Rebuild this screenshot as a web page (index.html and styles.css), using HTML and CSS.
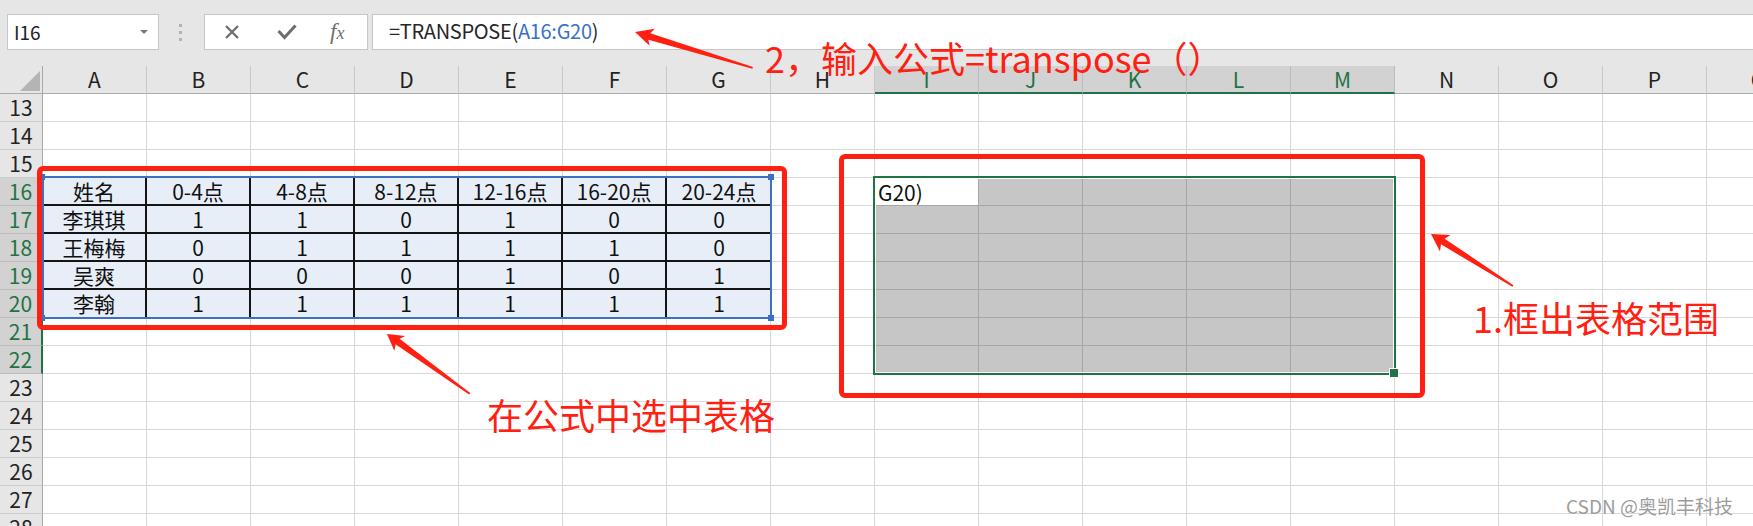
FILE: index.html
```html
<!DOCTYPE html>
<html lang="zh-CN">
<head>
<meta charset="utf-8">
<title>TRANSPOSE</title>
<link rel="stylesheet" href="styles.css">
</head>
<body>
<div class="page">
  <div class="toolbar">
    <div class="namebox"><span class="name">I16</span><span class="caret"></span></div>
    <div class="grip"><i></i><i></i><i></i></div>
    <div class="btns">
      <svg class="ic-x" width="16" height="16" viewBox="0 0 16 16"><path d="M2 2 L14 14 M14 2 L2 14" stroke="#6d6d6d" stroke-width="2.2" fill="none"/></svg>
      <svg class="ic-ok" width="20" height="16" viewBox="0 0 20 16"><polyline points="1.5,7 7.5,13.5 18.5,1.5" stroke="#6d6d6d" stroke-width="3" fill="none"/></svg>
      <span class="fx">f<span class="fx-x">x</span></span>
    </div>
    <div class="formula">=TRANSPOSE(<span class="ref">A16:G20</span>)</div>
  </div>

  <div class="sheet">
    <div class="corner"><span class="tri"></span></div>
    <div class="colheads">
      <div class="ch">A</div><div class="ch">B</div><div class="ch">C</div><div class="ch">D</div>
      <div class="ch">E</div><div class="ch">F</div><div class="ch">G</div><div class="ch">H</div>
      <div class="ch on">I</div><div class="ch on">J</div><div class="ch on">K</div><div class="ch on">L</div>
      <div class="ch on">M</div><div class="ch">N</div><div class="ch">O</div><div class="ch">P</div>
      <div class="ch">Q</div>
    </div>
    <div class="rowheads">
      <div class="rh">13</div><div class="rh">14</div><div class="rh">15</div>
      <div class="rh on">16</div><div class="rh on">17</div><div class="rh on">18</div>
      <div class="rh on">19</div><div class="rh on">20</div><div class="rh on">21</div>
      <div class="rh on">22</div><div class="rh">23</div><div class="rh">24</div>
      <div class="rh">25</div><div class="rh">26</div><div class="rh">27</div><div class="rh">28</div>
    </div>
    <div class="cells">
      <div class="tbl">
        <div class="tc">姓名</div><div class="tc">0-4点</div><div class="tc">4-8点</div><div class="tc">8-12点</div><div class="tc">12-16点</div><div class="tc">16-20点</div><div class="tc">20-24点</div>
        <div class="tc">李琪琪</div><div class="tc">1</div><div class="tc">1</div><div class="tc">0</div><div class="tc">1</div><div class="tc">0</div><div class="tc">0</div>
        <div class="tc">王梅梅</div><div class="tc">0</div><div class="tc">1</div><div class="tc">1</div><div class="tc">1</div><div class="tc">1</div><div class="tc">0</div>
        <div class="tc">吴爽</div><div class="tc">0</div><div class="tc">0</div><div class="tc">0</div><div class="tc">1</div><div class="tc">0</div><div class="tc">1</div>
        <div class="tc">李翰</div><div class="tc">1</div><div class="tc">1</div><div class="tc">1</div><div class="tc">1</div><div class="tc">1</div><div class="tc">1</div>
        <i class="hd tl"></i><i class="hd tr"></i><i class="hd bl"></i><i class="hd br"></i>
      </div>
      <div class="sel">
        <div class="sel-fill">
          <div class="active">G20)</div>
        </div>
      </div>
    </div>
  </div>

  <div class="annot">
    <div class="box box-left"></div>
    <div class="box box-right"></div>
    <svg class="arrows" width="1753" height="526" viewBox="0 0 1753 526">
      <g fill="#ff2012">
        <polygon transform="translate(635 32) rotate(16.97)" points="0,0 18,-9 15,-3.4 123,-1 123,1 15,3.4 18,9"/>
        <polygon transform="translate(387 334) rotate(35.86)" points="0,0 16,-9 13,-3.4 102,-1 102,1 13,3.4 16,9.5"/>
        <polygon transform="translate(1431 234) rotate(32.4)" points="0,0 17,-9.5 14,-3.4 97,-1 97,1 14,3.4 17,10"/>
      </g>
    </svg>
    <div class="note note-formula">2，输入公式=transpose（）</div>
    <div class="note note-select">在公式中选中表格</div>
    <div class="note note-range">1.框出表格范围</div>
    <div class="wm">CSDN @奥凯丰科技</div>
  </div>
</div>
</body>
</html>
```
FILE: styles.css
```css
* { box-sizing: border-box; }
html, body { margin: 0; padding: 0; }
body {
  width: 1753px;
  height: 526px;
  overflow: hidden;
  background: #fff;
  font-family: "Noto Sans CJK SC", "Noto Sans", sans-serif;
  color: #222;
}
.page { position: relative; width: 1753px; height: 526px; overflow: hidden; }

/* ---------- formula toolbar ---------- */
.toolbar {
  height: 66px;
  background: #e6e6e6;
  display: flex;
  align-items: flex-start;
  padding: 14px 0 0 7px;
}
.namebox {
  width: 152px;
  height: 36px;
  flex: none;
  background: #fff;
  border: 1px solid #c6c6c6;
  display: flex;
  align-items: center;
  padding-left: 6px;
}
.name { font-size: 19px; line-height: 32px; color: #222; }
.caret {
  margin-left: auto;
  margin-right: 10px;
  width: 0; height: 0;
  border-left: 4px solid transparent;
  border-right: 4px solid transparent;
  border-top: 4px solid #7a7a7a;
}
.grip {
  height: 36px;
  margin: 0 22px 0 20px;
  display: flex;
  flex-direction: column;
  justify-content: center;
  gap: 4px;
}
.grip i { display: block; width: 3px; height: 3px; background: #b3b3b3; }
.btns {
  width: 164px;
  height: 36px;
  flex: none;
  background: #fff;
  border: 1px solid #c6c6c6;
  display: flex;
  align-items: center;
  padding-left: 19px;
}
.ic-x { flex: none; }
.ic-ok { flex: none; margin-left: 37px; }
.fx {
  margin-left: 33px;
  font-family: "Liberation Serif", serif;
  font-style: italic;
  font-size: 23px;
  line-height: 32px;
  color: #707070;
}
.fx-x { font-size: 18px; }
.formula {
  flex: 1;
  height: 36px;
  margin-left: 4px;
  margin-right: -2px;
  background: #fff;
  border: 1px solid #c6c6c6;
  border-right: none;
  padding-left: 16px;
  font-size: 20px;
  letter-spacing: -0.3px;
  line-height: 32px;
  color: #262626;
  white-space: nowrap;
}
.ref { color: #3a6fc6; }

/* ---------- sheet ---------- */
.sheet {
  display: grid;
  grid-template-columns: 43px auto;
  grid-template-rows: 28px auto;
  width: max-content;
}
.corner {
  background: #e6e6e6;
  border-right: 1px solid #a8a8a8;
  border-bottom: 1px solid #ababab;
  display: flex;
  justify-content: flex-end;
  align-items: flex-end;
  padding: 0 2px 2px 0;
}
.tri {
  width: 0; height: 0;
  border-left: 20px solid transparent;
  border-bottom: 20px solid #b4b4b4;
}
.colheads { display: flex; }
.ch {
  width: 104px;
  height: 28px;
  flex: none;
  background: #e6e6e6;
  border-right: 1px solid #c8c8c8;
  border-bottom: 1px solid #ababab;
  text-align: center;
  font-size: 21px;
  line-height: 27px;
  color: #222;
}
.ch.on {
  background: #d2d2d2;
  color: #217346;
  border-right-color: #bcbcbc;
  border-bottom: 2px solid #217346;
}
.rowheads { display: flex; flex-direction: column; }
.rh {
  height: 28px;
  flex: none;
  background: #e6e6e6;
  border-right: 1px solid #a8a8a8;
  border-bottom: 1px solid #cdcdcd;
  text-align: center;
  font-size: 21px;
  line-height: 27px;
  color: #222;
}
.rh.on {
  background: #d2d2d2;
  color: #217346;
  border-bottom-color: #bcbcbc;
  border-right: 2px solid #217346;
}
.cells {
  display: grid;
  grid-template-columns: repeat(17, 104px);
  grid-template-rows: repeat(16, 28px);
  background-color: #fff;
  background-image:
    linear-gradient(to right, transparent 103px, #d9d9d9 103px),
    linear-gradient(to bottom, transparent 27px, #d9d9d9 27px);
  background-size: 104px 28px;
}

/* source table A16:G20 */
.tbl {
  grid-column: 1 / 8;
  grid-row: 4 / 9;
  position: relative;
  background: #e8eef8;
  display: grid;
  grid-template-columns: repeat(7, 104px);
  grid-template-rows: repeat(5, 28px);
}
.tbl::before {
  content: "";
  position: absolute;
  top: -2px; left: -1px; right: -1px; bottom: -1px;
  border: 2px solid #3d6fc4;
}
.tc {
  border-right: 2px solid #141414;
  border-bottom: 2px solid #141414;
  text-align: center;
  font-size: 21px;
  line-height: 26px;
  color: #111;
  white-space: nowrap;
}
.tc:nth-of-type(7n) { border-right: none; }
.tc:nth-of-type(n+29) { border-bottom: none; }
.hd { position: absolute; width: 6px; height: 6px; background: #3d6fc4; }
.hd.tl { left: -4px; top: -4px; }
.hd.tr { right: -3px; top: -4px; }
.hd.bl { left: -4px; bottom: -3px; }
.hd.br { right: -3px; bottom: -3px; }

/* target selection I16:M22 */
.sel {
  grid-column: 9 / 14;
  grid-row: 4 / 11;
  margin: -2px -1px -1px -2px;
  border: 2px solid #217346;
  padding: 1px;
  background: #fff;
  position: relative;
}
.sel::after {
  content: "";
  position: absolute;
  right: -5px; bottom: -5px;
  width: 8px; height: 8px;
  background: #217346;
  border: 1px solid #fff;
}
.sel-fill {
  height: 100%;
  background-color: #c6c6c6;
  background-image:
    linear-gradient(to right, transparent 103px, #a6a6a6 103px),
    linear-gradient(to bottom, transparent 27px, #a6a6a6 27px);
  background-size: 104px 28px;
  background-position: -1px -1px;
  display: grid;
  grid-template-columns: 102px;
  grid-template-rows: 26px;
}
.active {
  background: #fff;
  padding-left: 2px;
  font-size: 21px;
  line-height: 26px;
  color: #111;
  white-space: nowrap;
}

/* ---------- annotations ---------- */
.annot { position: absolute; top: 0; left: 0; right: 0; bottom: 0; pointer-events: none; }
.box { position: absolute; border: 5px solid #ff2012; border-radius: 6px; }
.box-left { left: 37px; top: 166px; width: 750px; height: 164px; }
.box-right { left: 839px; top: 154px; width: 586px; height: 244px; }
.arrows { position: absolute; left: 0; top: 0; }
.note {
  position: absolute;
  color: #ff2012;
  font-size: 36px;
  line-height: 36px;
  white-space: nowrap;
}
.note-formula { left: 765px; top: 39px; }
.note-select { left: 487px; top: 396px; }
.note-range { left: 1473px; top: 299px; }
.wm {
  position: absolute;
  left: 1566px;
  top: 496px;
  font-size: 19px;
  line-height: 19px;
  color: #9c9c9c;
  white-space: nowrap;
  text-shadow: 0 0 1px #fff;
}
```
